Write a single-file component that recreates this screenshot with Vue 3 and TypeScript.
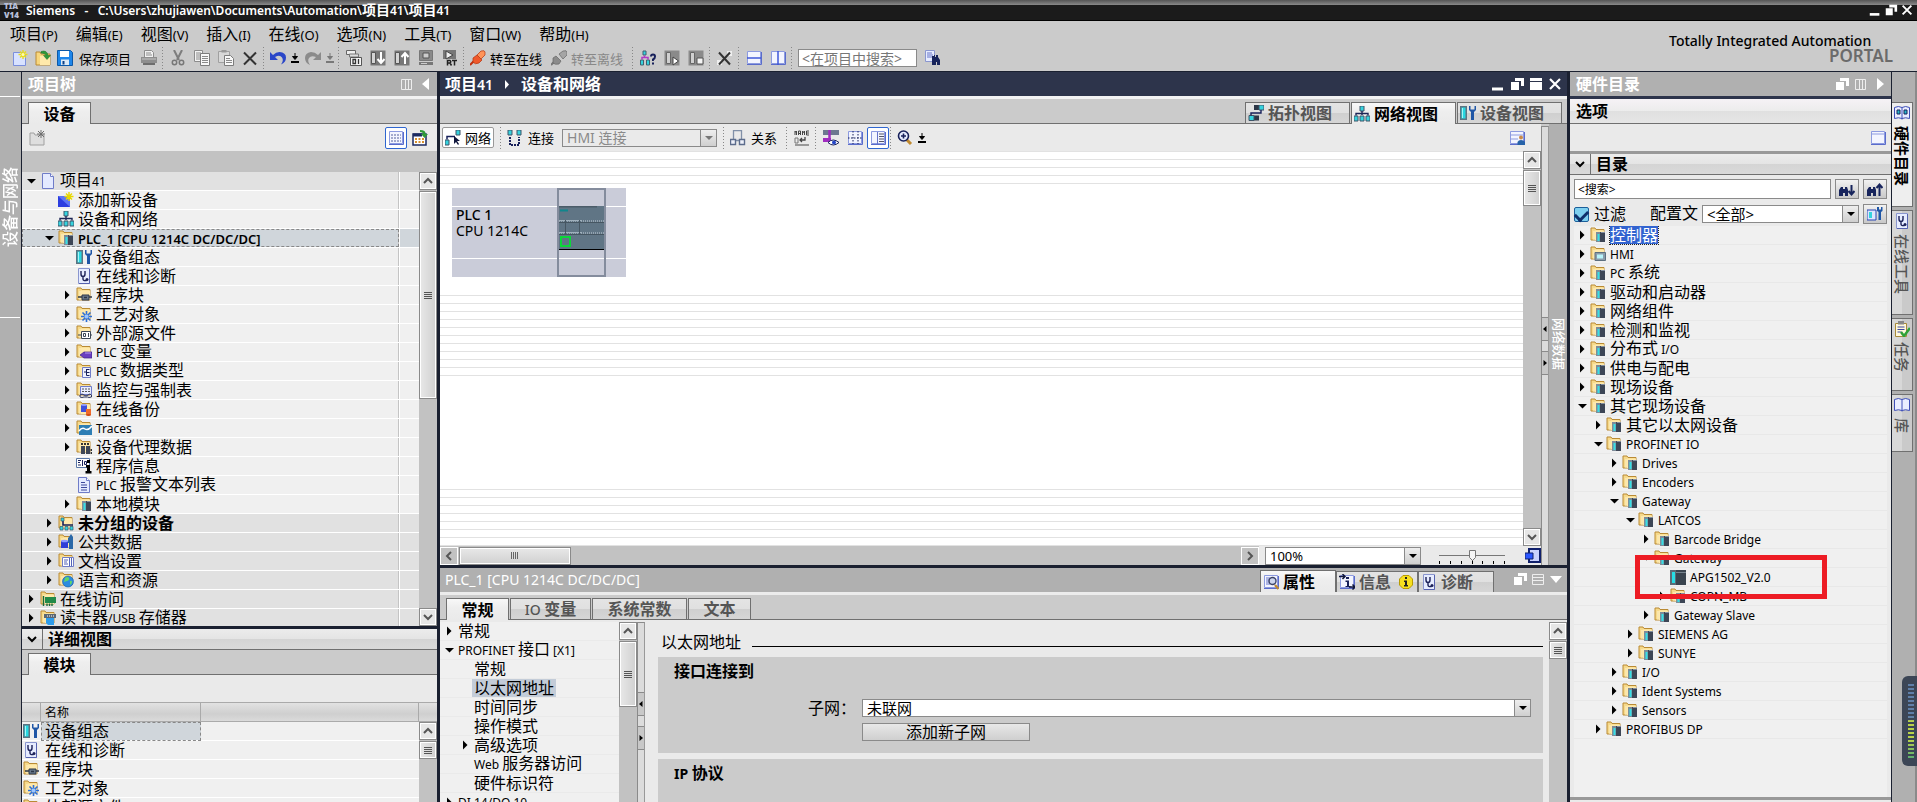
<script setup lang="ts">
import { h, ref } from 'vue'

type Item = { t: string; d: number; i?: string; a?: 'r' | 'd' | ''; bold?: boolean; dark?: boolean; sel?: boolean }

const folder =
  '<path d="M1 13V1h4l1 1.500h8V13z" fill="#f6d98a" stroke="#b98a34"/><path d="M5 3.500h9V13H5z" fill="#ffe9ab"/><path d="M4 4v9" stroke="#fff3cf"/>'
const rack =
  '<path d="M6 5h9v10H6z" fill="#3d4656"/><path d="M6 5h4v10H6z" fill="#7d8c99"/><path d="M7.500 7h2v7h-2z" fill="#35dfe6"/><path d="M11 5.500h4" stroke="#8591a3"/>'
const page = '<path d="M2.500.5h8l3 3v12h-11z" fill="#e4eaff" stroke="#6f7cc8"/><path d="M10.500.5v3h3" fill="#fff" stroke="#6f7cc8"/>'
const stetho =
  '<path d="M2.500.5h11v15h-11z" fill="#e6ecff" stroke="#8a96cf"/><path d="M13.500 1v14.500H3" stroke="#5662b0" fill="none"/><path d="M5 3v3q0 2.500 2 2.500T9 6V3M7 8.500V11q0 2 3.500 1.500" stroke="#1b2058" stroke-width="1.400" fill="none"/><circle cx="11" cy="11.500" r="1.500" fill="#1b2058"/>'
const device =
  '<path d="M0 1h7v14H0z" fill="#5c7482"/><path d="M1.500 2.500h4v11h-4z" fill="#27d8e2"/><path d="M2 3h1v10H2z" fill="#a5f5f7"/><path d="M9 1v4l2 2v8h3V7l2-2V1h-1.500v3.500h-4V1z" fill="#1f56a6"/>'
const net =
  '<path d="M6 0h4v5H6zM0 10h4v5H0zM6 10h4v5H6zM12 10h4v5h-4z" fill="#35d3de" stroke="#3f5568"/><path d="M8 5v4M2 9.500V7.500h12v2" stroke="#1c2455" stroke-width="1.400" fill="none"/>'
const win = '<path d="M1.500 1.500h13v12h-13z" fill="#f3f5ff" stroke="#8d9be0"/><path d="M1 14.500h14.500V2" stroke="#5a6ccb" fill="none"/>'
const bino = '<path d="M7 6h2v-1h1v2h1V5h2v2l2 3v5h-3v-3h-1v3H7v-5z" fill="#17245c"/>'
const arrowDn = '<path d="M4 0v4M1.500 3.500h5L4 6.500z" stroke="#000" fill="#000"/><path d="M0 9h8" stroke="#000" stroke-width="2"/>'

const pics: Record<string, string> = {
  folder,
  newdoc: '<path d="M1.500 2.500h9l3 3v10h-12z" fill="#d8e2ff" stroke="#7b8fdc"/><path d="M11 0v9M6.500 4.500h9M8 1.500l6 6M14 1.500l-6 6" stroke="#e8dc1c" stroke-width="1.400"/><circle cx="11" cy="4.500" r="1.500" fill="#fffbb0"/>',
  open: '<path d="M1 15V2h4l1 2h9v11z" fill="#f8d77e" stroke="#b98a34"/><path d="M5 6h10v9H5z" fill="#ffe9ab"/><path d="M6 1.500q6-2 7 4h2.500L12 9.500 8.500 5.500H11Q10 3 6 3z" fill="#2e9a38" stroke="#1b6d24" stroke-width=".5"/>',
  save: '<path d="M.5.5h13l2 2v13H.5z" fill="#1e86ea" stroke="#0c58a8"/><path d="M3 1h9v6H3z" fill="#fff"/><path d="M4 9.500h8V15H4z" fill="#dce9f5"/><path d="M5.500 11h2v3.500h-2z" fill="#0b3f86"/>',
  print: '<path d="M3.500.5h7l2 2V8h-9z" fill="#f2f2f2" stroke="#8c8c8c"/><path d="M5 3h5M5 5h6" stroke="#8c8c8c"/><path d="M0 7h16v6H0z" fill="#8e8e8e"/><path d="M1 9h14" stroke="#c6c6c6"/><path d="M2 13h12v2H2z" fill="#6e6e6e"/>',
  cut: '<path d="M4 0l5 10M12 0L7 10" stroke="#7d7d7d" stroke-width="2"/><circle cx="4.500" cy="12.500" r="2.200" fill="none" stroke="#777" stroke-width="1.500"/><circle cx="11.500" cy="12.500" r="2.200" fill="none" stroke="#777" stroke-width="1.500"/>',
  copy: '<path d="M.5.5h8v11h-8z" fill="#f3f3f3" stroke="#8c8c8c"/><path d="M6.500 3.500h9v12h-9z" fill="#f8f8f8" stroke="#7c7c7c"/><path d="M2 3h5M2 5h4M2 7h4M2 9h4M8 6.500h6M8 8.500h6M8 10.500h6M8 12.500h6" stroke="#8a8a8a"/>',
  paste: '<path d="M.5 1.500h11v11H.5z" fill="#d8d8d8" stroke="#a0a0a0"/><path d="M3.500 0h5v2.500h-5z" fill="#999"/><path d="M6.500 5.500h6l3 3v7h-9z" fill="#f8f8f8" stroke="#7c7c7c"/><path d="M8 8.500h4M8 10.500h6M8 12.500h6" stroke="#8a8a8a"/>',
  del: '<path d="M2 2.500l12 12M14 2.500l-12 12" stroke="#333" stroke-width="2"/>',
  undo: '<path d="M0 2v8h8L5 7q5-2.500 7 .5t-1 7q5-2 5-7t-6.500-5.500Q6 2 3 5z" fill="#2a46c8"/>',
  redo: '<path d="M16 2v8H8l3-3Q6 5 4 8t1 7Q0 13 0 8t6-6q4 0 7 3z" fill="#8b8b8b"/>',
  compile: '<path d="M.5.5h9v4h-9z" fill="#eee" stroke="#666"/><path d="M3.500 4h9v3h-9z" fill="#ddd" stroke="#777"/><path d="M4.500 7.500h11v8h-11z" fill="#f5f5f5" stroke="#555"/><path d="M7 9.500h2.500v4H7zM12.500 9v5" fill="none" stroke="#333" stroke-width="1.300"/>',
  down: '<path d="M.5.5h15v15H.5z" fill="#777"/><path d="M1.500 2.500h4v11h-4z" fill="#d4d4d4" stroke="#555"/><path d="M11 2v10M7.500 9l3.500 4 3.500-4" stroke="#fff" stroke-width="2" fill="none"/>',
  up: '<path d="M.5.5h15v15H.5z" fill="#777"/><path d="M1.500 2.500h4v11h-4z" fill="#d4d4d4" stroke="#555"/><path d="M11 14V4M7.500 7L11 3l3.500 4" stroke="#fff" stroke-width="2" fill="none"/>',
  sim: '<path d="M1.500.5h13v10h-13z" fill="#8a8a8a" stroke="#777"/><path d="M5 3h6v5H5z" fill="#ccc" stroke="#555"/><path d="M1 12h14v3H1z" fill="#777"/><path d="M3 13.500h6" stroke="#ccc"/>',
  rt: '<path d="M1 0h13v9H1z" fill="#777"/><path d="M4 1l7 4-7 4z" fill="#eee" stroke="#444"/><path d="M5.500 15.500v-5H8q1.500 1.200 0 2.500H6M8 13l1.500 2.500M10 10.500h5M12.500 10.500v5" stroke="#222" stroke-width="1.500" fill="none"/>',
  plug: '<path d="M0 15l4-4" stroke="#c22f0c" stroke-width="2"/><path d="M3 8l4-3 5 5-3 3q-4 2-6-1z" fill="#f0592b" stroke="#b2330e" stroke-width=".7"/><path d="M7 5l4-4q4-1 4 1t0 3l-4 4z" fill="#ff9459" stroke="#b2330e" stroke-width=".7"/>',
  plugoff: '<path d="M0 15l4-4" stroke="#777" stroke-width="2"/><path d="M2 8l3-2 5 5-2 3q-4 1-6-1z" fill="#8b8b8b" stroke="#666" stroke-width=".7"/><path d="M8 4l4-3q4-1 4 1t0 3l-4 4z" fill="#a5a5a5" stroke="#666" stroke-width=".7"/>',
  nodes: '<path d="M3 1h3v4H3zM.500 10h3v5h-3zM6.500 10h3v5h-3z" fill="#35d3de" stroke="#3f6070"/><path d="M4.500 5.500v2M2 9.500v-2h6v2" stroke="#b03ac6" stroke-width="1.500" fill="none"/><path d="M11 6.500q0-2 2-2t2 2-2 3v1.500M13 12.500v2" stroke="#17205a" stroke-width="2" fill="none"/>',
  go: '<path d="M.5.5h15v15H.5z" fill="#8a8a8a"/><path d="M2.500 2.500h4v11h-4z" fill="#d0d0d0" stroke="#666"/><path d="M9 7l5.500 4L9 15z" fill="#fff" stroke="#444"/>',
  stop: '<path d="M.5.5h15v15H.5z" fill="#8a8a8a"/><path d="M2.500 2.500h4v11h-4z" fill="#d0d0d0" stroke="#666"/><path d="M9 8h6v6H9z" fill="#f5f5f5" stroke="#555"/>',
  xref: '<path d="M10 1h5v5h-5zM0 10h5v5H0z" fill="#efefef"/><path d="M2 2.500l11 12M13 2.500l-11 12" stroke="#333" stroke-width="2"/>',
  splitH: win + '<path d="M1 8h14" stroke="#3f57d8" stroke-width="1.500"/>',
  splitV: win + '<path d="M8 1v14" stroke="#3f57d8" stroke-width="1.500"/>',
  find: '<path d="M.5.5h9v11h-9z" fill="#e7ecff" stroke="#8a96cf"/><path d="M2 3h5M2 5h6M2 7h5" stroke="#6674c8"/>' + bino,
  project: page,
  add: '<path d="M0 4h12v11H0z" fill="#2c3ee0"/><path d="M0 4h12v11z" fill="#5d75f5"/><path d="M11 0v9M6.500 4.500h9M8 1.500l6 6M14 1.500l-6 6" stroke="#e8d800" stroke-width="1.400"/>',
  net,
  plc: folder + rack,
  device,
  stetho,
  block: folder + '<path d="M6 8h7v5H6z" fill="#68788a" stroke="#2c3646"/><path d="M2 10h4M13 10h3M8 10.500h3" stroke="#2c3646" stroke-width="1.500"/>',
  tech: folder + '<path d="M10.500 5v11M5 10.500h11M6.500 6.500l8 8M14.500 6.500l-8 8" stroke="#2c6fd6" stroke-width="1.600"/><circle cx="10.500" cy="10.500" r="2" fill="#9cc6ff"/>',
  ext: folder + '<path d="M5.500 6.500h9v7h-9z" fill="#fff" stroke="#3c4654"/><path d="M7.500 8.500h2v3h-2zM12.500 8v4M2 10h3M15 10h1" stroke="#3c4654" fill="none"/>',
  tag: folder + '<path d="M4 11l4-3h8v6H8z" fill="#6b3fc0" stroke="#3e1f86" stroke-width=".7"/><path d="M9 9h6" stroke="#b99cf2"/>',
  types: folder + '<path d="M6.500 4.500h8v10h-8z" fill="#eef1ff" stroke="#6f7cc8"/><path d="M8 9h2.500M10.500 6v6.500M10.500 6.500h3M10.500 9.500h3M10.500 12.500h3" stroke="#17205a"/>',
  watch: folder + '<path d="M4.500 4.500h11v8h-11z" fill="#e9edff" stroke="#6f7cc8"/><path d="M6 7h8M6 9.500h8" stroke="#555" stroke-dasharray="2 1"/><path d="M4 13q2-2 4 0t4 0 3.500 0v2q-3 1-4 0H8q-2 1-4 0z" fill="none" stroke="#30385e"/>',
  backup: folder + '<path d="M5 4h6v7H5z" fill="#3f4fdc"/><ellipse cx="8" cy="4" rx="3" ry="1" fill="#8e9bff"/><path d="M10 8h5v6h-5z" fill="#ef6a2c"/><ellipse cx="12.500" cy="14" rx="2.500" ry="1" fill="#d04c10"/>',
  trace: folder + '<path d="M3 5h13v10H3z" fill="#2e7eb4"/><path d="M3 11q3-4 6-2t7-3" stroke="#fff" stroke-width="1.500" fill="none"/>',
  proxy: folder + '<path d="M5 7h4v8H5zM10 7h4v8h-4z" fill="#3d4656"/><path d="M5 4h2v2H5zM8 4h2v2H8zM11 4h2v2h-2zM14.500 10h1.500v2h-1.500zM14.500 13h1.500v2h-1.500z" fill="#333"/>',
  info: '<path d="M.5.5h13v9H.5z" fill="#fff" stroke="#5a78a8"/><path d="M2 2.500h3M2 4.500h2M2 7h3M6.500 2v6M8.500 3.500h2v3h-2z" stroke="#17205a" fill="none"/><path d="M11 2h3v3h-3zM10 7h4v6h1.500v2.500h-6V13H11V9.500h-1z" fill="#000"/>',
  textlist: page + '<path d="M5 5.500h4M5 8h6M5 10.500h6M5 13h6" stroke="#3c489c" stroke-width="1.200"/>',
  ungroup: folder + '<path d="M5 4v6h10" stroke="#17205a" stroke-width="1.600" fill="none"/><path d="M3 3h3v3H3zM2 11.500h3V15H2zM7 11.500h3V15H7zM12 11.500h3V15h-3z" fill="#35d3de" stroke="#31596a" stroke-width=".7"/>',
  common: folder + '<path d="M3 7h7v7H3z" fill="#2f3fd8"/><ellipse cx="6.500" cy="7" rx="3.500" ry="1.300" fill="#8e9bff"/><path d="M11 3l2-3 2 3v12h-4V9h-1V4z" fill="#2a68a8"/>',
  docset: folder + '<path d="M4.500 4.500h11v9h-11z" fill="#fff" stroke="#6f7cc8"/><path d="M6 7h4M6 9h3M6 11h4M11.500 5v8M13.500 5v8" stroke="#5363b8"/>',
  globe: folder + '<circle cx="10" cy="9.500" r="5.500" fill="#2b8be0" stroke="#125aa0" stroke-width=".6"/><path d="M7 6q3-2 4 0t-2 3-3 1zM12 9q2-1 2 1t-2 3z" fill="#61d46a"/>',
  access: folder + '<path d="M5 6h11v6H5z" fill="#228a4a"/><path d="M3.500 5v10M7 12.500v2.500M9.500 12.500v2.500M12 12.500v2.500" stroke="#1a6b38" stroke-width="1.400"/>',
  reader: folder + '<path d="M4 4h12v4H4z" fill="#5a6674"/><path d="M6 8h8v7H8l-2-2z" fill="#2e9bea"/><path d="M7 6h1M9 6h1M11 6h1M13 6h1" stroke="#fff"/>',
  hmi: folder + '<path d="M5 6.500h10.500v8H5z" fill="#8a9cab" stroke="#5c6f80"/><path d="M7 8.500h6v4H7z" fill="#b8f4fa"/>',
  module: '<path d="M0 1h16v15H0z" fill="#5b6b76"/><path d="M6 1h10v15H6z" fill="#39444f"/><path d="M2 3h3v11H2z" fill="#27dce4"/><path d="M6 3.500h10" stroke="#76848f"/>',
  newgrp: '<path d="M1 15V3h4l1 2h9v10z" fill="#dedede" stroke="#a0a0a0"/><path d="M12 0v8M8 4h8M9 1l6 6M15 1L9 7" stroke="#6e6e6e"/>',
  cols: win + '<path d="M3 5h10M3 8h10M3 11h10" stroke="#55609c" stroke-dasharray="2 1"/>',
  exporttbl: '<path d="M1 4h13v11H1z" fill="#fff" stroke="#1b2a60" stroke-width="1.500"/><path d="M1 3.500h9v3H1z" fill="#1b2a60"/><path d="M3 9h9M3 12h9" stroke="#d8902c" stroke-width="2" stroke-dasharray="2 1.500"/><path d="M8 0q6 0 5.500 4H16l-3.500 4L9 4h2q0-2-3-2z" fill="#2e9a38"/>',
  netmode: '<path d="M11 0h4v5h-4zM0 10h4v5H0z" fill="#35d3de" stroke="#3f5568"/><path d="M2 9.500V6.500h8" stroke="#17205a" stroke-width="1.500" fill="none"/><path d="M9 6v8l2-2 2 3 1-1-2-3h3z" fill="#10163c"/>',
  conn: '<path d="M1 0h4v5H1zM10 0h4v5h-4z" fill="#35d3de" stroke="#3f5568"/><path d="M3 7v8h9V7" stroke="#17205a" stroke-width="2" stroke-dasharray="2 1" fill="none"/>',
  relation: '<path d="M3.500.5h8v10h-8z" fill="none" stroke="#8190a8" stroke-width="1.300"/><path d="M.500 9.500h5v5h-5zM9.500 9.500h5v5h-5z" fill="#eef1fa" stroke="#5c6c8c" stroke-width="1.400"/>',
  name: '<path d="M1 5V1l1.500 2V1v4M4.500 5V1h2v4M4.500 3.500h2M8.500 5V1l1 1.500L10.500 1v4M15 1h-2.500v4H15M12.500 3H15" stroke="#444" fill="none"/><path d="M1 8h3v5H1z" fill="none" stroke="#777"/><path d="M11 7v3H6M8 8l-2 2 2 2" stroke="#444" stroke-width="1.300" fill="none"/><path d="M1 15h14" stroke="#999" stroke-width="2"/>',
  eye: '<path d="M0 0h16v5H0z" fill="#6d7890"/><path d="M6.500 0v9" stroke="#a02cc0" stroke-width="2.500" fill="none"/><path d="M0 8h8v4H0z" fill="#a02cc0"/><path d="M5 12.500q5-5 11 0-6 5-11 0z" fill="#fff" stroke="#17205a"/><circle cx="11" cy="12.500" r="2" fill="#2446c8"/>',
  pagebrk: win + '<path d="M1 8h14M6 1v13M11 1v13" stroke="#17205a" stroke-dasharray="1.500 1.500"/>',
  overview: win + '<path d="M7.500 2v12" stroke="#6674c8"/><path d="M9 4h5M9 6.500h5M9 9h5M9 11.500h5" stroke="#556"/>',
  zoom: '<path d="M9 9l5 5" stroke="#c08a30" stroke-width="3"/><circle cx="6.500" cy="6" r="5" fill="#e6ecff" stroke="#17205a" stroke-width="1.600"/><path d="M6.500 3.500v5M4 6h5" stroke="#17205a" stroke-width="1.600"/>',
  userwin: win + '<path d="M1 5h13M1 9h8" stroke="#8d9be0"/><circle cx="12" cy="7.500" r="2" fill="#c98a4a"/><path d="M8.500 15v-3q1-2 3.500-2t4 2v3z" fill="#2662a8"/>',
  topo: '<path d="M6 0h5v5H6zM1 11h5v4H1z" fill="#2c3646"/><path d="M11 0h5v5h-5z" fill="#35d3de" stroke="#3f5568"/><path d="M6 10.500h5v5H6z" fill="#2c3646"/><path d="M1 10.500h5v5H1z" fill="#35d3de" stroke="#3f5568"/><path d="M13 5v3H3v2.500" stroke="#17205a" stroke-width="1.400" fill="none"/>',
  prop: win + '<path d="M3 4h4M3 6h3M3 8h3M3 10h4" stroke="#6674c8"/><path d="M12 11l3.500 4" stroke="#c08a30" stroke-width="2.500"/><circle cx="9.500" cy="7" r="3.500" fill="#cdd6ee" stroke="#3c4468" stroke-width="1.400"/>',
  infotab: win + '<path d="M7 3h3v2H7zM6.500 6.500H10V12h1.500v1h-5v-1H8V8H6.500z" fill="#17205a"/><path d="M0 2.500h6M3.500 0L6 2.500 3.500 5M10 13h6M13.500 10.500L16 13l-2.500 2.500" stroke="#10163c" stroke-width="1.500" fill="none"/>',
  badge: '<path d="M5 1.500h6L14.500 5v6L11 14.500H5L1.500 11V5z" fill="#f7e01e" stroke="#b89b00"/><path d="M7 3h2v2H7zM6 6.500h3V11h1v1.500H6V11h1V8H6z" fill="#222"/>',
  blank: win + '<path d="M1 4h13" stroke="#8d9be0"/>',
  bdown: '<path d="M0 15V9l2-3h2v2h2V6h2l1 3v6H6v-3H4v3z" fill="#17245c"/><path d="M12.500 4v9M9.500 10l3 3.500 3-3.500" stroke="#17245c" stroke-width="2" fill="none"/>',
  bup: '<path d="M0 15V9l2-3h2v2h2V6h2l1 3v6H6v-3H4v3z" fill="#17245c"/><path d="M12.500 15V5M9.500 7l3-3.500 3 3.500" stroke="#17245c" stroke-width="2" fill="none"/>',
  profile: '<path d="M0 4h9v10H0z" fill="#dce6ff" stroke="#2643b0"/><path d="M2 6h3v6H2z" fill="#35d3de"/><path d="M10 1v4l1.500 1v8h2.500V6l1.500-1V1H14v2.500h-2V1z" fill="#1f56a6"/>',
  book: '<path d="M.5 2.500q4-2 7.500 0 3.500-2 7.500 0v11q-4-1.500-7.500 0-3.500-1.500-7.500 0z" fill="#e9edff" stroke="#3f4fb8"/><path d="M8 2.500v12" stroke="#3f4fb8"/>',
  hwbook: '<path d="M.5 2.500q4-2 7.500 0 3.500-2 7.500 0v11q-4-1.500-7.500 0-3.500-1.500-7.500 0z" fill="#e9edff" stroke="#3f4fb8"/><path d="M8 2.500v12" stroke="#3f4fb8"/><path d="M3 5h3v4H3zM10 5h3v4h-3z" fill="#27b8c8" stroke="#17205a"/>',
  task: '<path d="M1.500 2.500h11v13h-11z" fill="#fff8dc" stroke="#a88a3a"/><path d="M4 0h6v3.500H4z" fill="#888"/><path d="M3.500 6h7M3.500 8.500h7M3.500 11h4" stroke="#3c489c"/><path d="M7 11l3 4 6-8" stroke="#2ea238" stroke-width="2.500" fill="none"/>',
  fit: '<path d="M4 1h11v13H4z" fill="#c9d2ff" stroke="#10206c" stroke-width="2"/><path d="M0 5h8v6H0z" fill="#2a56ff" stroke="#10206c"/>',
  wmin: '<path d="M2 13h11" stroke="#fff" stroke-width="3"/>',
  wrest: '<path d="M6 2h9v8h-3V5H6z" fill="#fff"/><path d="M2 6h8v8H2z" fill="#fff"/>',
  wmax: '<path d="M2 2h12v3H2zM2 6h12v8H2z" fill="#fff"/>',
  wx: '<path d="M3 3l10 10M13 3L3 13" stroke="#fff" stroke-width="2.200"/>',
  wcols: '<path d="M2.500 3.500h10v10h-10zM6.500 3v10M9.500 3v10" fill="none" stroke="#eee"/>',
  wrows: '<path d="M2.500 3.500h11v10h-11zM3 6.500h10M3 9.500h10" fill="none" stroke="#eee"/>',
  left: '<path d="M11 2v12L4 8z" fill="#fff"/>',
  right: '<path d="M5 2v12l7-6z" fill="#fff"/>',
  crumb: '<path d="M6 4v9l4-4.500z" fill="#fff"/>',
  downw: '<path d="M2 5h12l-6 7z" fill="#fff"/>',
  r: '<path d="M6 3.500v9L10.500 8z" fill="#000"/>',
  d: '<path d="M4 6h9L8.500 10.500z" fill="#000"/>',
  cu: '<path d="M4 10l4-4 4 4" fill="none" stroke="#555" stroke-width="2"/>',
  cd: '<path d="M4 6l4 4 4-4" fill="none" stroke="#555" stroke-width="2"/>',
  cl: '<path d="M10 4L6 8l4 4" fill="none" stroke="#555" stroke-width="2"/>',
  cr: '<path d="M6 4l4 4-4 4" fill="none" stroke="#555" stroke-width="2"/>',
  chev: '<path d="M4 6l4 4 4-4" fill="none" stroke="#000" stroke-width="2"/>',
}

const Ic = (p: { n: string }) =>
  h('svg', { class: 'ic', width: 16, height: 16, viewBox: '0 0 16 16', 'aria-hidden': 'true', innerHTML: pics[p.n] })
Ic.props = ['n']

const Dn = () => h('svg', { class: 'ic', width: 8, height: 10, viewBox: '0 0 8 10', 'aria-hidden': 'true', innerHTML: arrowDn })

/* Chinese runs are set larger than the Latin runs beside them. */
const Tx = (p: { s: string }) =>
  h(
    'span',
    { class: 'tx' },
    p.s
      .split(/([\u2e80-\u9fff\uff00-\uffef]+)/)
      .filter(Boolean)
      .map((r) => h('span', { class: /[\u2e80-\u9fff\uff00-\uffef]/.test(r) ? 'zh' : 'la' }, r)),
  )
Tx.props = ['s']

const Bar = (p: { end?: boolean }) =>
  h('div', { class: 'vbar' }, [
    h('button', { class: 'sb', 'aria-label': '向上滚动' }, [h(Ic, { n: 'cu' })]),
    h('div', { class: 'thumb' }, [h('i', { class: 'grip' })]),
    p.end ? h('button', { class: 'sb last', 'aria-label': '向下滚动' }, [h(Ic, { n: 'cd' })]) : null,
  ])
Bar.props = { end: Boolean }

const menus = ['项目(P)', '编辑(E)', '视图(V)', '插入(I)', '在线(O)', '选项(N)', '工具(T)', '窗口(W)', '帮助(H)']

const tree: Item[] = [
  { t: '项目41', d: 0, i: 'project', a: 'd', dark: true },
  { t: '添加新设备', d: 1, i: 'add' },
  { t: '设备和网络', d: 1, i: 'net' },
  { t: 'PLC_1 [CPU 1214C DC/DC/DC]', d: 1, i: 'plc', a: 'd', bold: true, sel: true },
  { t: '设备组态', d: 2, i: 'device' },
  { t: '在线和诊断', d: 2, i: 'stetho' },
  { t: '程序块', d: 2, i: 'block', a: 'r' },
  { t: '工艺对象', d: 2, i: 'tech', a: 'r' },
  { t: '外部源文件', d: 2, i: 'ext', a: 'r' },
  { t: 'PLC 变量', d: 2, i: 'tag', a: 'r' },
  { t: 'PLC 数据类型', d: 2, i: 'types', a: 'r' },
  { t: '监控与强制表', d: 2, i: 'watch', a: 'r' },
  { t: '在线备份', d: 2, i: 'backup', a: 'r' },
  { t: 'Traces', d: 2, i: 'trace', a: 'r' },
  { t: '设备代理数据', d: 2, i: 'proxy', a: 'r' },
  { t: '程序信息', d: 2, i: 'info' },
  { t: 'PLC 报警文本列表', d: 2, i: 'textlist' },
  { t: '本地模块', d: 2, i: 'plc', a: 'r' },
  { t: '未分组的设备', d: 1, i: 'ungroup', a: 'r', bold: true, dark: true },
  { t: '公共数据', d: 1, i: 'common', a: 'r', dark: true },
  { t: '文档设置', d: 1, i: 'docset', a: 'r', dark: true },
  { t: '语言和资源', d: 1, i: 'globe', a: 'r', dark: true },
  { t: '在线访问', d: 0, i: 'access', a: 'r', dark: true },
  { t: '读卡器/USB 存储器', d: 0, i: 'reader', a: 'r', dark: true },
]

const catalog: Item[] = [
  { t: '控制器', d: 0, a: 'r', sel: true },
  { t: 'HMI', d: 0, a: 'r', i: 'hmi' },
  { t: 'PC 系统', d: 0, a: 'r' },
  { t: '驱动和启动器', d: 0, a: 'r' },
  { t: '网络组件', d: 0, a: 'r' },
  { t: '检测和监视', d: 0, a: 'r' },
  { t: '分布式 I/O', d: 0, a: 'r' },
  { t: '供电与配电', d: 0, a: 'r' },
  { t: '现场设备', d: 0, a: 'r' },
  { t: '其它现场设备', d: 0, a: 'd' },
  { t: '其它以太网设备', d: 1, a: 'r' },
  { t: 'PROFINET IO', d: 1, a: 'd' },
  { t: 'Drives', d: 2, a: 'r' },
  { t: 'Encoders', d: 2, a: 'r' },
  { t: 'Gateway', d: 2, a: 'd' },
  { t: 'LATCOS', d: 3, a: 'd' },
  { t: 'Barcode Bridge', d: 4, a: 'r' },
  { t: 'Gateway', d: 4, a: 'd' },
  { t: 'APG1502_V2.0', d: 5, i: 'module' },
  { t: 'COPN_MB', d: 5, a: 'r' },
  { t: 'Gateway Slave', d: 4, a: 'r' },
  { t: 'SIEMENS AG', d: 3, a: 'r' },
  { t: 'SUNYE', d: 3, a: 'r' },
  { t: 'I/O', d: 2, a: 'r' },
  { t: 'Ident Systems', d: 2, a: 'r' },
  { t: 'Sensors', d: 2, a: 'r' },
  { t: 'PROFIBUS DP', d: 1, a: 'r' },
]

const nav: Item[] = [
  { t: '常规', d: 0, a: 'r' },
  { t: 'PROFINET 接口 [X1]', d: 0, a: 'd' },
  { t: '常规', d: 1 },
  { t: '以太网地址', d: 1, sel: true },
  { t: '时间同步', d: 1 },
  { t: '操作模式', d: 1 },
  { t: '高级选项', d: 1, a: 'r' },
  { t: 'Web 服务器访问', d: 1 },
  { t: '硬件标识符', d: 1 },
  { t: 'DI 14/DQ 10', d: 0, a: 'r' },
]

const details = [
  { t: '设备组态', i: 'device' },
  { t: '在线和诊断', i: 'stetho' },
  { t: '程序块', i: 'block' },
  { t: '工艺对象', i: 'tech' },
  { t: '外部源文件', i: 'ext' },
]

const subTabs = ['常规', 'IO 变量', '系统常数', '文本']
const railTabs = [
  { t: '硬件目录', i: 'hwbook', c: 'r1' },
  { t: '在线工具', i: 'stetho', c: 'r2' },
  { t: '任务', i: 'task', c: 'r3' },
  { t: '库', i: 'book', c: 'r4' },
]
const filterOn = ref(true)
</script>

<template>
  <div class="app">
    <header class="title">
      <span class="logo"><b>TIA</b><b>V14</b></span>
      <Tx class="ttl" s="Siemens   -   C:\Users\zhujiawen\Documents\Automation\项目41\项目41" />
      <div class="wins">
        <button aria-label="最小化"><Ic n="wmin" /></button>
        <button aria-label="还原"><Ic n="wrest" /></button>
        <button aria-label="关闭"><Ic n="wx" /></button>
      </div>
    </header>

    <div class="top">
      <div class="topmain">
        <nav class="menu">
          <button v-for="m in menus" :key="m"><Tx :s="m" /></button>
        </nav>
        <div class="tools">
          <button class="t23" aria-label="新建"><Ic n="newdoc" /></button>
          <button class="t23" aria-label="打开"><Ic n="open" /></button>
          <button class="t21" aria-label="保存"><Ic n="save" /></button>
          <span class="lbl l4">保存项目</span>
          <button class="t24" aria-label="打印"><Ic n="print" /></button>
          <i class="sep"></i>
          <button v-for="n in ['cut', 'copy', 'paste', 'del']" :key="n" class="t24" :aria-label="n"><Ic :n="n" /></button>
          <i class="sep"></i>
          <button class="t21" aria-label="撤销"><Ic n="undo" /></button>
          <button class="t14" aria-label="撤销列表"><Dn /></button>
          <button class="t21" aria-label="恢复"><Ic n="redo" /></button>
          <button class="t14 off" aria-label="恢复列表"><Dn /></button>
          <i class="sep"></i>
          <button v-for="n in ['compile', 'down', 'up', 'sim', 'rt']" :key="n" class="t24" :aria-label="n"><Ic :n="n" /></button>
          <i class="sep"></i>
          <button class="t21" aria-label="在线"><Ic n="plug" /></button>
          <span class="lbl">转至在线</span>
          <button class="t21" aria-label="离线"><Ic n="plugoff" /></button>
          <span class="lbl dim">转至离线</span>
          <i class="sep"></i>
          <button v-for="n in ['nodes', 'go', 'stop']" :key="n" class="t24" :aria-label="n"><Ic :n="n" /></button>
          <i class="sep"></i>
          <button class="t24" aria-label="交叉引用"><Ic n="xref" /></button>
          <i class="sep"></i>
          <button class="t24" aria-label="水平拆分"><Ic n="splitH" /></button>
          <button class="t24" aria-label="垂直拆分"><Ic n="splitV" /></button>
          <i class="sep"></i>
          <input class="projfind" aria-label="在项目中搜索" placeholder="<在项目中搜索>" />
          <button class="t32" aria-label="搜索"><Ic n="find" /></button>
        </div>
      </div>
      <div class="brand"><b>Totally Integrated Automation</b><strong>PORTAL</strong></div>
    </div>

    <main class="body">
      <aside class="lrail"><span class="lrtab">设备与网络</span></aside>

      <section class="left">
        <div class="phead"><Tx class="grow" s="项目树" /><Ic n="wcols" /><Ic n="left" /></div>
        <div class="strip"><button class="tab on w62"><Tx s="设备" /></button></div>
        <div class="bar27">
          <button class="ib" aria-label="新建组"><Ic n="newgrp" /></button>
          <span class="grow"></span>
          <button class="ib boxed" aria-label="概览"><Ic n="cols" /></button>
          <button class="ib wide" aria-label="导出"><Ic n="exporttbl" /></button>
        </div>
        <div class="gap21"></div>
        <div class="treebox">
          <ul class="tree">
            <li v-for="(n, k) in tree" :key="k" :class="{ dark: n.dark, sel: n.sel, bold: n.bold }">
              <div class="c1" :style="{ paddingLeft: n.d * 18 + 'px' }">
                <span class="ar"><Ic v-if="n.a" :n="n.a" /></span><Ic :n="n.i || 'folder'" /><Tx :s="n.t" />
              </div>
              <div class="c2"></div>
            </li>
          </ul>
          <Bar end class="b-tree" />
        </div>
        <div class="hline"></div>
        <div class="detail">
          <div class="fold"><button aria-label="折叠"><Ic n="chev" /></button><Tx s="详细视图" /></div>
          <div class="strip"><button class="tab on w62"><Tx s="模块" /></button></div>
          <div class="bar27"></div>
          <div class="dwrap">
            <table>
              <thead>
                <tr><th class="k1"></th><th class="k2">名称</th><th></th></tr>
              </thead>
              <tbody>
                <tr v-for="(r, k) in details" :key="r.t" :class="{ sel: k === 0 }">
                  <td class="k1"><Ic :n="r.i" /></td>
                  <td class="k2"><Tx :s="r.t" /></td>
                  <td></td>
                </tr>
              </tbody>
            </table>
            <div class="dbar"><div class="dbh"></div><Bar class="b-det" /></div>
          </div>
        </div>
      </section>

      <section class="mid">
        <div class="phead navy">
          <Tx s="项目41" /><Ic n="crumb" /><Tx class="grow" s="设备和网络" />
          <Ic n="wmin" /><Ic n="wrest" /><Ic n="wmax" /><Ic n="wx" />
        </div>
        <div class="strip views">
          <button class="tab w105"><Ic n="topo" /><Tx s="拓扑视图" /></button>
          <button class="tab on w105"><Ic n="net" /><Tx s="网络视图" /></button>
          <button class="tab w105"><Ic n="device" /><Tx s="设备视图" /></button>
        </div>
        <div class="work">
          <div class="edit">
            <div class="bar27 etools">
              <button class="netbtn"><Ic n="netmode" /><span>网络</span></button>
              <i class="sep"></i>
              <button class="t21" aria-label="连接"><Ic n="conn" /></button>
              <label class="lbl" for="ctype">连接</label>
              <span class="combo dimc"><select id="ctype" disabled><option>HMI 连接</option></select><i class="dd"></i></span>
              <i class="sep"></i>
              <button class="t21" aria-label="关系"><Ic n="relation" /></button>
              <span class="lbl">关系</span>
              <i class="sep"></i>
              <button class="t24" aria-label="名称"><Ic n="name" /></button>
              <i class="sep"></i>
              <button class="t24" aria-label="显示地址"><Ic n="eye" /></button>
              <button class="t24" aria-label="分页"><Ic n="pagebrk" /></button>
              <button class="ib boxed" aria-label="总览"><Ic n="overview" /></button>
              <i class="sep"></i>
              <button class="t21" aria-label="缩放"><Ic n="zoom" /></button>
              <button class="t14" aria-label="缩放列表"><Dn /></button>
              <span class="grow"></span>
              <button class="t24" aria-label="保存窗口设置"><Ic n="userwin" /></button>
            </div>
            <div class="stage">
              <div class="canvas">
                <div class="ln l1"></div>
                <div class="ln l2"></div>
                <div class="ln l3"></div>
                <div class="station">
                  <div class="sname">
                    <span>PLC  1</span>
                    <span class="s2">CPU 1214C</span>
                  </div>
                  <div class="slot">
                    <svg width="45" height="44" viewBox="0 0 45 44" aria-hidden="true">
                      <path d="M0 0h45v44H0z" fill="#607585" />
                      <path d="M0 .5h38" stroke="#4b5c69" stroke-width="2" />
                      <path d="M1 4.500h8" stroke="#10868c" stroke-width="2" />
                      <path d="M0 15h45M0 27h45" stroke="#c5d0d8" stroke-dasharray="1 1" />
                      <path d="M0 14.500h23M0 26.500h23" stroke="#9fb0bc" />
                      <path d="M0 16.500h45M0 28.500h45M6.500 14v14M20.500 14v14" stroke="#465662" />
                      <path d="M2 31h9v9H2z" fill="none" stroke="#0cd63a" stroke-width="2" />
                      <path d="M0 43.500h45" stroke="#000" />
                    </svg>
                  </div>
                </div>
              </div>
              <Bar end class="b-can" />
            </div>
            <div class="hrow">
              <button class="sb" aria-label="向左滚动"><Ic n="cl" /></button>
              <div class="hthumb"><i class="grip v"></i></div>
              <span class="grow"></span>
              <button class="sb" aria-label="向右滚动"><Ic n="cr" /></button>
              <span class="zoombox">
                <span class="combo zc"><select aria-label="缩放比例"><option>100%</option></select><i class="dd"></i></span>
                <svg class="slider" width="68" height="16" viewBox="0 0 68 16" aria-hidden="true">
                  <path d="M0 7.500h66" stroke="#777" />
                  <path d="M.500 13v3M11.500 13v3M22.500 13v3M33.500 12v4M43.500 13v3M54.500 13v3M65.500 13v3" stroke="#000" />
                  <path d="M30.500 2.500h6v7l-3 3-3-3z" fill="#f5f5f5" stroke="#777" />
                </svg>
                <Ic n="fit" />
              </span>
            </div>
          </div>
          <div class="split"><button class="m1" aria-label="展开"><Ic n="left" /></button><button aria-label="收起"><Ic n="right" /></button></div>
          <div class="netdata"><span>网络数据</span></div>
        </div>
        <div class="hline"></div>
        <div class="props">
          <div class="pbar">
            <span class="pname">PLC_1 [CPU 1214C DC/DC/DC]</span>
            <button class="tab on w76"><Ic n="prop" /><Tx s="属性" /></button>
            <button class="tab w82"><Ic n="infotab" /><Tx s="信息" /><Ic n="badge" class="bdg" /></button>
            <button class="tab w76"><Ic n="stetho" /><Tx s="诊断" /></button>
            <span class="pwins"><Ic n="wrest" /><Ic n="wrows" /><Ic n="downw" /></span>
          </div>
          <div class="strip sub">
            <button v-for="(s, k) in subTabs" :key="s" class="tab" :class="[{ on: k === 0 }, 'st' + k]"><Tx :s="s" /></button>
          </div>
          <div class="pbody">
            <ul class="nav">
              <li v-for="(n, k) in nav" :key="k" :style="{ paddingLeft: n.d * 16 + 'px' }" :class="{ sel: n.sel }">
                <span class="ar"><Ic v-if="n.a" :n="n.a" /></span><Tx :s="n.t" />
              </li>
            </ul>
            <Bar class="b-nav" />
            <div class="split s2"><button class="m2" aria-label="收起"><Ic n="left" /></button><button aria-label="展开"><Ic n="right" /></button></div>
            <div class="form">
              <div class="fh"><Tx s="以太网地址" /><i></i></div>
              <div class="card">
                <h3><Tx s="接口连接到" /></h3>
                <div class="frow">
                  <label for="subnet"><Tx s="子网：" /></label>
                  <span class="combo sn"><select id="subnet"><option>未联网</option></select><i class="dd"></i></span>
                </div>
                <div class="frow"><button class="addnet">添加新子网</button></div>
              </div>
              <div class="card"><h3><Tx s="IP 协议" /></h3></div>
            </div>
            <Bar class="b-form" />
          </div>
        </div>
      </section>

      <section class="right">
        <div class="phead cat"><Tx class="grow" s="硬件目录" /><Ic n="wrest" /><Ic n="wcols" /><Ic n="right" /></div>
        <div class="opt"><Tx s="选项" /></div>
        <div class="bar27 rb"><span class="grow"></span><button class="ib" aria-label="窗口"><Ic n="blank" /></button></div>
        <div class="fold rf"><button aria-label="折叠"><Ic n="chev" /></button><Tx s="目录" /></div>
        <div class="search">
          <input aria-label="搜索" value="<搜索>" />
          <button aria-label="向下搜索"><Ic n="bdown" /></button>
          <button aria-label="向上搜索"><Ic n="bup" /></button>
        </div>
        <div class="filter">
          <label class="fl"><input v-model="filterOn" type="checkbox" /><Tx s="过滤" /></label>
          <label class="pf" for="prof"><Tx s="配置文" /></label>
          <span class="combo fc"><select id="prof"><option>&lt;全部&gt;</option></select><i class="dd"></i></span>
          <button aria-label="配置文件"><Ic n="profile" /></button>
        </div>
        <ul class="cattree">
          <li v-for="(n, k) in catalog" :key="k" :class="{ sel: n.sel }" :style="{ paddingLeft: n.d * 16 + 'px' }">
            <span class="ar"><Ic v-if="n.a" :n="n.a" /></span><Ic :n="n.i || 'plc'" /><Tx :s="n.t" />
          </li>
          <li class="mark"></li>
        </ul>
        <div class="catend"></div>
      </section>

      <aside class="rrail">
        <button v-for="(r, k) in railTabs" :key="r.t" :class="[r.c, { on: k === 0 }]"><Ic :n="r.i" /><span>{{ r.t }}</span></button>
        <div class="meter"><i></i></div>
      </aside>
    </main>
  </div>
</template>

<style>
html,
body {
  margin: 0;
  overflow: hidden;
}
.ic {
  display: block;
  flex: none;
}
.tx {
  white-space: pre;
  font-size: 16px;
}
.zh {
  font-size: 16px;
}
.la {
  font-size: 12px;
}
.vbar {
  display: flex;
  flex-direction: column;
  flex: none;
  width: 18px;
  background: #c2c2c2;
  gap: 1px;
}
.sb {
  flex: none;
  box-sizing: border-box;
  width: 18px;
  height: 18px;
  padding: 0;
  border: 1px solid #8a8a8a;
  background: #e6e6e6;
  box-shadow: inset 0 0 0 1px #fff;
  display: flex;
  align-items: center;
  justify-content: center;
}
.sb.last {
  margin-top: auto;
}
.thumb,
.hthumb {
  box-sizing: border-box;
  border: 1px solid #8a8a8a;
  box-shadow: inset 0 0 0 1px #fff;
  display: flex;
  align-items: center;
  justify-content: center;
  background: linear-gradient(90deg, #e8e8e8, #d0d0d0);
}
.grip {
  width: 8px;
  height: 7px;
  background: repeating-linear-gradient(#555 0 1px, transparent 1px 2px);
}
.grip.v {
  background: repeating-linear-gradient(90deg, #666 0 1px, transparent 1px 2px);
}
</style>

<style scoped>
.app {
  height: 100vh;
  display: flex;
  flex-direction: column;
  overflow: hidden;
  background: #cbcbcb;
  font-family: 'Noto Sans', 'Noto Sans CJK SC', sans-serif;
  font-size: 12px;
  color: #000;
}
.app * {
  box-sizing: border-box;
}
button {
  font: inherit;
  color: inherit;
  border: 0;
  background: none;
  padding: 0;
}
ul {
  list-style: none;
  margin: 0;
  padding: 0;
}
.grow {
  flex: 1;
}
.title {
  flex: none;
  height: 21px;
  display: flex;
  align-items: center;
  background: linear-gradient(#555 0, #8a8a8a 5px, #1b1b1b 5px);
  border-bottom: 1px solid #000;
  color: #fff;
  font-weight: 600;
}
.logo {
  width: 26px;
  display: flex;
  flex-direction: column;
  padding-left: 4px;
  font-size: 8px;
  line-height: 9px;
  color: #b8c0da;
}
.ttl {
  flex: 1;
  line-height: 18px;
  font-size: 14px;
}
.ttl :deep(.zh) {
  font-size: 14px;
}
.ttl :deep(.la) {
  font-size: 12px;
}
.wins {
  display: flex;
  padding-right: 2px;
}
.wins .ic {
  width: 14px;
  height: 14px;
  margin: 0 1px;
}
.top {
  flex: none;
  height: 51px;
  display: flex;
  justify-content: space-between;
  border-bottom: 1px solid #1a2030;
}
.menu {
  display: flex;
  gap: 18px;
  padding-left: 10px;
  height: 27px;
  align-items: center;
}
.menu :deep(.la) {
  font-size: 13px;
}
.menu button {
  line-height: 24px;
}
.tools {
  display: flex;
  align-items: center;
  height: 20px;
  padding-left: 8px;
}
.tools button,
.etools button {
  flex: none;
  display: flex;
  align-items: center;
  justify-content: center;
}
.t14 {
  width: 14px;
}
.t21 {
  width: 21px;
}
.t23 {
  width: 23px;
}
.t24 {
  width: 24px;
}
.t32 {
  width: 32px;
}
.off {
  opacity: 0.4;
}
.lbl {
  font-size: 13px;
  padding: 0 6px 0 2px;
  white-space: nowrap;
}
.lbl.l4 {
  padding-left: 4px;
}
.lbl.dim {
  color: #888;
  padding-right: 8px;
}
.etools .lbl {
  padding: 0 8px 0 3px;
}
.sep {
  flex: none;
  width: 5px;
  height: 22px;
  background: repeating-linear-gradient(#888 0 1px, transparent 1px 3px) 1px 0 / 1px 100% no-repeat;
}
.projfind {
  width: 119px;
  height: 18px;
  margin-left: 3px;
  border: 1px solid #8a8a8a;
  background: #fff;
  padding: 0 3px;
  font: 14px 'Noto Sans', 'Noto Sans CJK SC', sans-serif;
  line-height: 16px;
}
.projfind::placeholder {
  color: #777;
  opacity: 1;
}
.brand {
  width: 248px;
  padding-top: 12px;
  display: flex;
  flex-direction: column;
  font-size: 14px;
  line-height: 16px;
  white-space: nowrap;
}
.brand b {
  font-weight: 500;
}
.brand strong {
  align-self: flex-end;
  margin-right: 24px;
  font-weight: 600;
  font-size: 17px;
  line-height: 14px;
  color: #6b6b6b;
}
.body {
  flex: 1;
  min-height: 0;
  display: flex;
}
.lrail {
  flex: none;
  width: 22px;
  background: #b0b0b0;
  border-right: 1px solid #1a2030;
  padding-top: 24px;
}
.lrtab {
  display: block;
  height: 222px;
  border-top: 1px solid #fff;
  border-bottom: 1px solid #fff;
  writing-mode: vertical-rl;
  text-orientation: sideways;
  transform: rotate(180deg);
  font-size: 16px;
  line-height: 20px;
  color: #fff;
  font-weight: 500;
  text-align: right;
  padding-bottom: 70px;
}
.left {
  flex: none;
  width: 418px;
  border-right: 3px solid #1a2030;
  display: flex;
  flex-direction: column;
  min-height: 0;
}
.phead {
  flex: none;
  height: 27px;
  display: flex;
  align-items: center;
  gap: 3px;
  padding: 0 3px 0 6px;
  background: #b0b0b0;
  border-bottom: 3px solid #f2f2f2;
  color: #fff;
  font-weight: 600;
  line-height: 22px;
}
.phead.navy {
  background: #2d344b;
  padding-right: 4px;
  padding-left: 5px;
}
.phead.cat {
  border-bottom-color: #2d344b;
}
.navy :deep(.la) {
  font-size: 14px;
}
.navy .tx + .ic {
  margin: 0 3px;
}
.navy .grow + .ic {
  margin: 0;
}
.strip {
  flex: none;
  height: 25px;
  display: flex;
  align-items: flex-end;
  background: #cbcbcb;
  border-bottom: 1px solid #707070;
  padding-left: 6px;
  gap: 1px;
}
.tab {
  display: flex;
  align-items: center;
  justify-content: center;
  gap: 4px;
  height: 21px;
  border: 1px solid #707070;
  border-bottom: 0;
  background: linear-gradient(#e4e4e4, #e0e0e0 50%, #cfcfcf 50%, #d6d6d6);
  color: #555;
  font-weight: 600;
  line-height: 20px;
  white-space: nowrap;
}
.tab :deep(.la) {
  font-weight: 500;
  font-size: 14px;
}
.tab.on {
  height: 22px;
  margin-bottom: -1px;
  color: #000;
  font-weight: 700;
  background: linear-gradient(#f8f8f8, #eee 40%, #eaeaea);
}
.w62 {
  width: 63px;
}
.w76 {
  width: 76px;
}
.w82 {
  width: 82px;
}
.w105 {
  width: 105px;
}
.views {
  justify-content: flex-end;
  padding-right: 5px;
}
.views .tab,
.pbar .tab {
  justify-content: flex-start;
  padding-left: 2px;
}
.bdg {
  margin-left: 3px;
}
.bar27 {
  flex: none;
  height: 27px;
  display: flex;
  align-items: center;
  background: #eaeaea;
  padding: 0 4px;
}
.ib {
  flex: none;
  width: 22px;
  height: 22px;
  display: flex;
  align-items: center;
  justify-content: center;
}
.ib.wide {
  width: 26px;
}
.boxed {
  border: 1px solid #2f66d0;
  border-radius: 2px;
  background: #fff;
}
.gap21 {
  flex: none;
  height: 21px;
  background: #c2c2c2;
}
.treebox {
  flex: 1;
  min-height: 0;
  display: flex;
  overflow: hidden;
}
.tree {
  flex: 1;
  background: #f0f0f0;
}
.tree li {
  display: flex;
  height: 19px;
  border-bottom: 1px solid #fff;
  background: #f0f0f0;
}
.tree li.dark {
  background: #e1e1e1;
}
.tree li.sel {
  background: #d0d6db;
}
.tree li.bold {
  font-weight: 700;
}
.tree li.bold :deep(.la) {
  font-size: 13px;
  font-weight: 600;
}
.c1 {
  flex: 1;
  display: flex;
  align-items: center;
  line-height: 18px;
  border-right: 1px solid #c4c4c4;
}
.sel .c1 {
  outline: 1px dashed #888;
  outline-offset: -1px;
}
.c1 .tx {
  margin-left: 4px;
}
.c2 {
  width: 20px;
  border-left: 1px solid #fff;
}
.ar {
  flex: none;
  width: 18px;
  display: flex;
  justify-content: center;
}
.b-tree :deep(.thumb) {
  height: 208px;
}
.hline {
  flex: none;
  height: 3px;
  background: #1a2030;
}
.detail {
  flex: none;
  height: 173px;
  display: flex;
  flex-direction: column;
  overflow: hidden;
}
.fold {
  flex: none;
  height: 21px;
  display: flex;
  align-items: center;
  background: linear-gradient(#ececec, #e4e4e4 50%, #d4d4d4 50%, #dadada);
  border-bottom: 1px solid #707070;
  font-weight: 700;
  line-height: 20px;
}
.fold button {
  width: 21px;
  height: 20px;
  padding-left: 2px;
  margin-right: 5px;
  border-right: 1px solid #707070;
}
.dwrap {
  flex: 1;
  display: flex;
  min-height: 0;
  background: #f0f0f0;
}
table {
  flex: 1;
  align-self: flex-start;
  border-collapse: separate;
  border-spacing: 0;
  table-layout: fixed;
  width: 100%;
}
th {
  height: 20px;
  padding: 0 4px;
  font-weight: 400;
  font-size: 12px;
  line-height: 17px;
  text-align: left;
  background: linear-gradient(#e2e2e2, #cfcfcf 60%, #dadada);
  border: 1px solid #aaa;
  border-left: 0;
}
td {
  height: 19px;
  padding: 0 4px;
  line-height: 18px;
  border-bottom: 1px solid #fff;
}
td .tx {
  display: block;
  height: 18px;
}
td.k1 {
  padding: 0 1px;
}
.k1 {
  width: 19px;
}
.k2 {
  width: 160px;
}
tr.sel .k2 {
  background: #d0d6db;
  outline: 1px dashed #888;
  outline-offset: -1px;
}
.dbar {
  width: 18px;
  display: flex;
  flex-direction: column;
}
.dbh {
  height: 20px;
  background: linear-gradient(#e2e2e2, #cfcfcf 60%, #dadada);
  border-top: 1px solid #aaa;
  border-bottom: 1px solid #aaa;
}
.b-det {
  flex: 1;
}
.b-det :deep(.thumb),
.b-form :deep(.thumb) {
  height: 18px;
}
.mid {
  flex: 1;
  min-width: 0;
  display: flex;
  flex-direction: column;
}
.work {
  flex: 1;
  min-height: 0;
  display: flex;
}
.edit {
  flex: 1;
  min-width: 0;
  display: flex;
  flex-direction: column;
}
.etools {
  padding: 0 12px 0 2px;
}
.netbtn {
  width: 52px;
  height: 21px;
  gap: 4px;
  background: #fff;
  border: 1px solid #999;
  border-radius: 2px;
  font-size: 13px;
  margin-right: 5px;
}
.combo {
  display: flex;
  height: 18px;
  border: 1px solid #8a8a8a;
  background: #fff;
}
.combo select {
  flex: 1;
  min-width: 0;
  appearance: none;
  border: 0;
  background: none;
  padding: 0 4px;
  font: 13px 'Noto Sans', 'Noto Sans CJK SC', sans-serif;
  line-height: 16px;
  color: #000;
  opacity: 1;
}
.dd {
  width: 16px;
  border-left: 1px solid #8a8a8a;
  background: linear-gradient(#eee, #cfcfcf);
  display: flex;
  align-items: center;
  justify-content: center;
}
.dd::after {
  content: '';
  border: 4px solid transparent;
  border-top-color: #000;
  border-bottom: 0;
}
.dimc {
  width: 155px;
  margin-right: 5px;
  background: #eaeaea;
}
.dimc select {
  color: #8a8a8a;
}
.dimc select,
.sn select,
.fc select {
  font-size: 15px;
}
.dimc select {
  font-size: 14px;
}
.dimc .dd::after {
  border-top-color: #777;
}
.stage {
  flex: 1;
  min-height: 0;
  display: flex;
}
.canvas {
  flex: 1;
  position: relative;
  background: #fff;
  display: flex;
  flex-direction: column;
  overflow: hidden;
}
.ln {
  flex: none;
  background: repeating-linear-gradient(#e2e2e2 0 1px, transparent 1px 8px);
}
.l1 {
  height: 33px;
}
.l2 {
  height: 81px;
  margin-top: 111px;
}
.l3 {
  flex: 1;
  margin-top: 113px;
}
.station {
  position: absolute;
  left: 12px;
  top: 37px;
  width: 174px;
  height: 89px;
  background: linear-gradient(#caccd9 18px, #fff 18px 19px, #caccd9 19px 70px, #fff 70px 71px, #caccd9 71px);
}
.sname {
  display: flex;
  flex-direction: column;
  padding: 19px 0 0 4px;
  font-size: 14px;
  line-height: 16px;
  font-weight: 500;
  white-space: pre;
}
.s2 {
  font-weight: 400;
}
.slot {
  position: absolute;
  left: 105px;
  top: 0;
  width: 49px;
  height: 89px;
  border: 2px solid #848c9d;
  padding-top: 16px;
}
.slot svg {
  display: block;
}
.b-can :deep(.thumb) {
  height: 36px;
}
.hrow {
  flex: none;
  height: 19px;
  display: flex;
  align-items: center;
  background: #c2c2c2;
}
.hthumb {
  width: 112px;
  height: 18px;
  margin-left: 1px;
  background: linear-gradient(#e8e8e8, #d0d0d0);
}
.zoombox {
  display: flex;
  align-items: center;
  height: 19px;
  background: #eaeaea;
  padding-left: 6px;
}
.zc {
  width: 156px;
}
.slider {
  margin: 0 18px;
}
.split {
  flex: none;
  width: 8px;
  margin-top: 2px;
  background: #dcdcdc;
  border: 1px solid #8a8a8a;
  border-right-color: #999;
  border-bottom: 0;
}
.split button {
  display: flex;
  align-items: center;
  justify-content: center;
  width: 6px;
  height: 24px;
  overflow: hidden;
  border: solid #8a8a8a;
  border-width: 1px 0;
  background: #c8c8c8;
  margin-bottom: 10px;
}
.split .ic {
  width: 8px;
  height: 8px;
  filter: invert(1);
}
.m1 {
  margin-top: 190px;
}
.m2 {
  margin-top: 69px;
}
.netdata {
  flex: none;
  width: 18px;
  background: #b0b0b0;
  display: flex;
  color: #fff;
  writing-mode: vertical-rl;
  text-orientation: sideways;
  padding-top: 194px;
  font-size: 13px;
  line-height: 16px;
  font-weight: 500;
}
.props {
  flex: none;
  height: 234px;
  display: flex;
  flex-direction: column;
  overflow: hidden;
}
.pbar {
  flex: none;
  height: 27px;
  display: flex;
  align-items: flex-end;
  background: #b0b0b0;
  border-bottom: 3px solid #ececec;
  color: #fff;
  font-size: 14px;
}
.pbar .tab {
  margin-bottom: 0;
}
.pname {
  flex: 1;
  padding-left: 5px;
  align-self: center;
  line-height: 20px;
}
.pwins {
  display: flex;
  width: 73px;
  justify-content: flex-end;
  gap: 2px;
  padding: 0 3px 5px 0;
}
.st0,
.st3 {
  width: 63px;
}
.st1 {
  width: 81px;
}
.st2 {
  width: 95px;
}
.pbody {
  flex: 1;
  display: flex;
  min-height: 0;
  background: #eaeaea;
  padding-top: 2px;
}
.nav {
  flex: none;
  width: 179px;
  background: #f0f0f0;
  overflow: hidden;
}
.nav li {
  height: 19px;
  display: flex;
  align-items: center;
  line-height: 18px;
  border-bottom: 1px solid #eaeaea;
}
.nav li.sel .tx {
  background: #c3ccd8;
  padding: 0 2px;
  margin-left: -2px;
}
.b-nav :deep(.thumb) {
  height: 66px;
}
.s2.split {
  margin-top: 0;
}
.form {
  flex: 1;
  min-width: 0;
  padding: 7px 6px 0 13px;
}
.fh {
  display: flex;
  align-items: center;
  gap: 11px;
  height: 24px;
  padding-left: 3px;
  margin-bottom: 4px;
}
.fh i {
  flex: 1;
  height: 1px;
  background: #000;
  margin-top: 11px;
}
.card {
  height: 96px;
  background: #cbcbcb;
  margin-bottom: 6px;
}
h3 {
  margin: 0;
  padding: 2px 0 0 16px;
  font-size: 12px;
  line-height: 24px;
  height: 42px;
  font-weight: 700;
}
h3 :deep(.la) {
  font-size: 14px;
}
.frow {
  display: flex;
  height: 24px;
  padding-right: 12px;
}
.frow label {
  flex: none;
  width: 204px;
  padding-right: 6px;
  text-align: right;
  line-height: 18px;
}
.sn {
  flex: 1;
}
.addnet {
  width: 168px;
  height: 18px;
  margin-left: 204px;
  border: 1px solid #8a8a8a;
  background: linear-gradient(#e8e8e8, #cfcfcf);
  font-size: 16px;
  line-height: 16px;
}
.right {
  flex: none;
  width: 325px;
  border-left: 3px solid #1a2030;
  border-right: 1px solid #1a2030;
  background: #eaeaea;
  display: flex;
  flex-direction: column;
}
.opt {
  flex: none;
  height: 25px;
  padding-left: 6px;
  font-weight: 700;
  line-height: 24px;
  background: linear-gradient(#f6f2f6, #ececec 50%, #e0e0e0 50%, #e6e6e6);
  border-bottom: 1px solid #707070;
}
.rb {
  height: 30px;
  padding: 0 2px;
  border-bottom: 3px solid #999;
}
.search {
  flex: none;
  display: flex;
  gap: 4px;
  padding: 4px 4px 5px;
}
.search input {
  flex: 1;
  min-width: 0;
  height: 20px;
  border: 1px solid #8a8a8a;
  padding: 0 3px;
  font: 12px 'Noto Sans', 'Noto Sans CJK SC', sans-serif;
}
.search button,
.filter button {
  flex: none;
  width: 24px;
  height: 20px;
  border: 1px solid #8a8a8a;
  background: linear-gradient(#f2f2f2, #c8c8c8);
  display: flex;
  align-items: center;
  justify-content: center;
}
.filter {
  flex: none;
  display: flex;
  align-items: center;
  height: 20px;
  padding: 0 4px;
}
.fl {
  display: flex;
  align-items: center;
  gap: 5px;
  width: 76px;
  line-height: 20px;
}
.fl input {
  appearance: none;
  margin: 0;
  width: 15px;
  height: 15px;
  border: 1px solid #1c5f9a;
  border-radius: 2px;
  background: #7fd0f0;
  display: flex;
  justify-content: center;
}
.fl input:checked::after {
  content: '';
  width: 6px;
  height: 10px;
  border: solid #10306c;
  border-width: 0 3px 3px 0;
  transform: rotate(45deg);
}
.pf {
  width: 52px;
  line-height: 20px;
}
.fc {
  flex: 1;
  margin-right: 4px;
}
.cattree {
  flex: 1;
  min-height: 0;
  position: relative;
  background: #f0f0f0;
  margin: 2px 4px 0;
  overflow: hidden;
}
.cattree li {
  height: 19px;
  display: flex;
  align-items: center;
  line-height: 18px;
  border-bottom: 1px solid #e8e8e8;
}
.cattree .tx {
  margin-left: 4px;
}
.cattree .ar {
  width: 16px;
}
.cattree li.sel .tx {
  background: #3163d0;
  color: #fff;
  outline: 1px dotted #222;
}
.cattree li.mark {
  position: absolute;
  left: 61px;
  top: 329px;
  width: 192px;
  height: 44px;
  border: 5px solid #ed1c24;
}
.catend {
  flex: none;
  height: 5px;
  border-top: 3px solid #999;
}
.rrail {
  flex: none;
  width: 25px;
  background: #b0b0b0;
  border-right: 2px solid #8a8a8a;
  padding-top: 30px;
  display: flex;
  flex-direction: column;
  gap: 3px;
  position: relative;
}
.rrail button {
  flex: none;
  width: 21px;
  border: 1px solid #707070;
  border-left: 0;
  background: linear-gradient(90deg, #d8d8d8 50%, #cacaca 50%);
  display: flex;
  flex-direction: column;
  align-items: center;
  gap: 5px;
  padding-top: 2px;
  color: #555;
  font-size: 15px;
  font-weight: 500;
}
.rrail button span {
  writing-mode: vertical-rl;
  text-orientation: sideways;
  line-height: 18px;
}
.rrail button.on {
  background: #eee;
  color: #000;
  font-weight: 700;
}
.r1,
.r2 {
  height: 105px;
}
.r3 {
  height: 73px;
}
.r4 {
  height: 58px;
}
.meter {
  position: absolute;
  right: -2px;
  bottom: 36px;
  width: 15px;
  height: 90px;
  border-radius: 6px 0 0 6px;
  background: #3c4656;
  padding: 8px 3px 8px 6px;
}
.meter i {
  display: block;
  height: 100%;
  background:
    repeating-linear-gradient(transparent 0 2px, #3c4656 2px 4px),
    linear-gradient(#5f7fa8 45%, #b9d34a 50% 75%, #5fb070);
}
</style>
